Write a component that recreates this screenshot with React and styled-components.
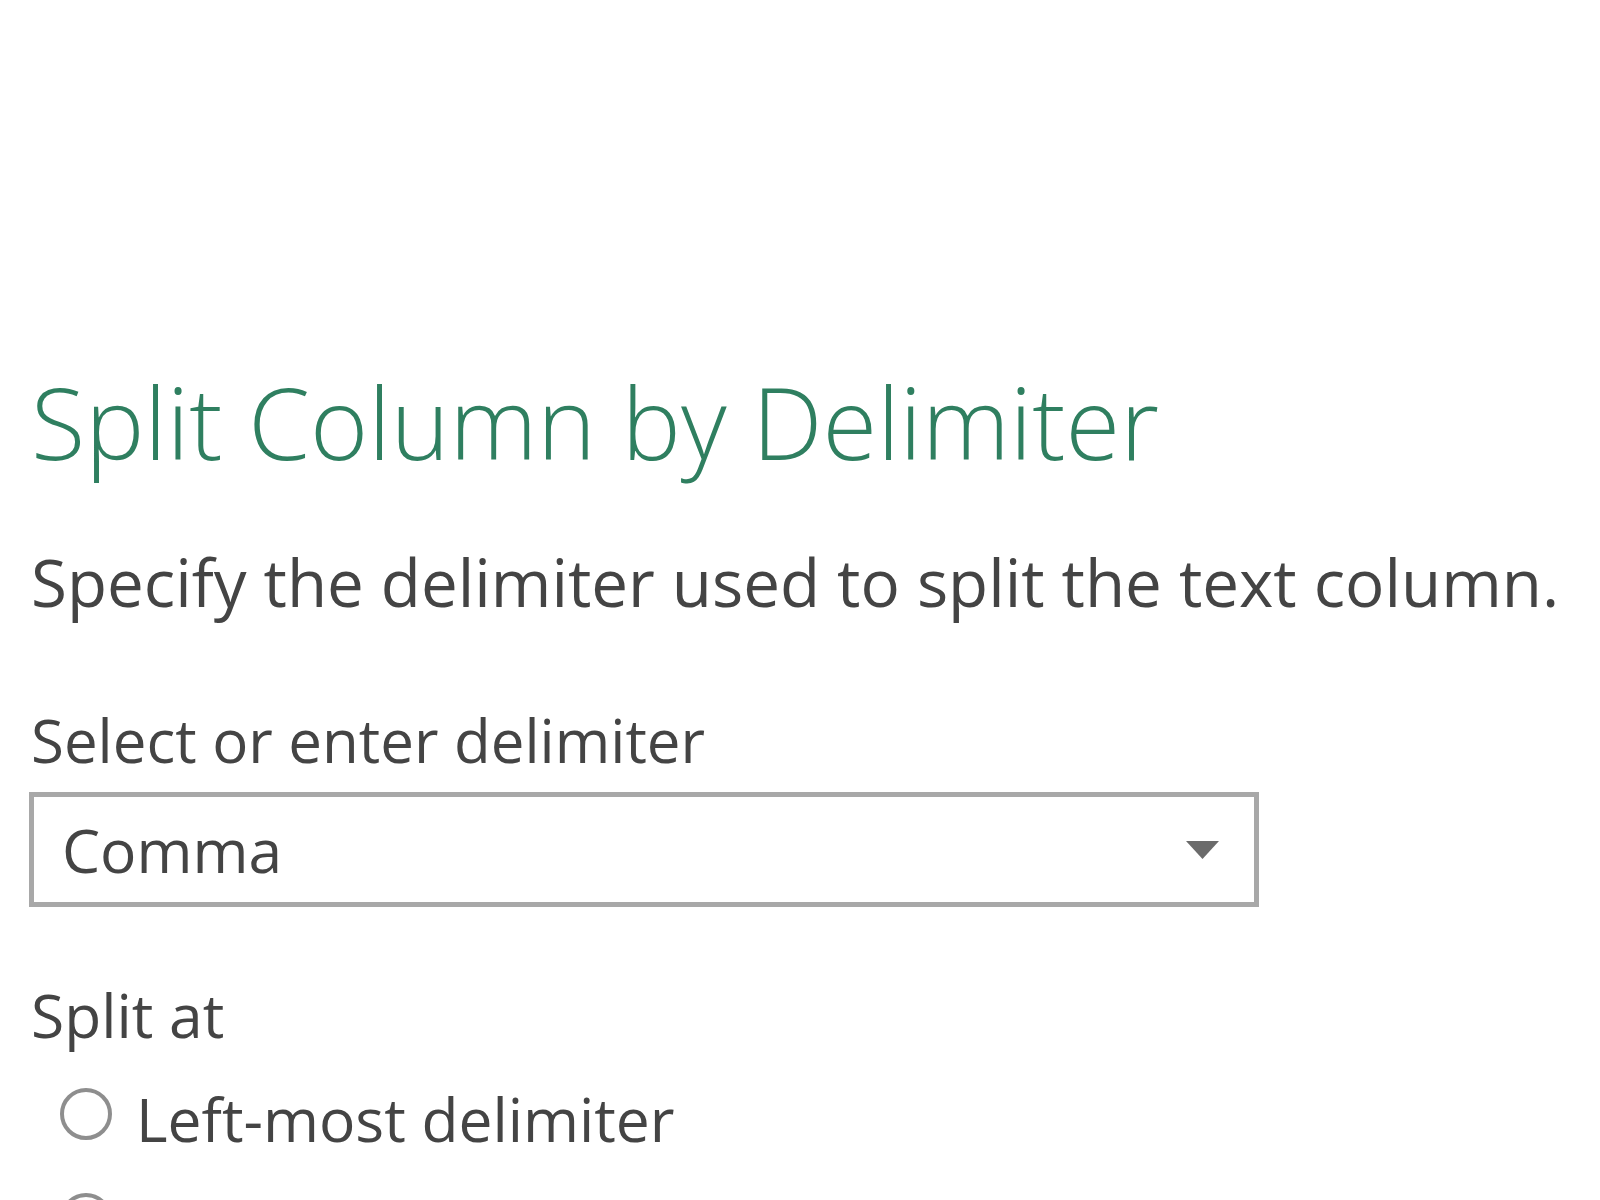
import React from "react";
import styled, { createGlobalStyle } from "styled-components";

const Global = createGlobalStyle`
  html, body { margin: 0; padding: 0; background: #ffffff; }
  body { font-family: "Open Sans", "Noto Sans", sans-serif; overflow: hidden; height: 1200px; }
`;

const Dialog = styled.div`
  padding: 362px 0 0 31px;
  display: flex;
  flex-direction: column;
  align-items: flex-start;
  color: #444444;
`;

const Title = styled.h1`
  margin: 0;
  font-weight: 300;
  font-size: 99.4px;
  line-height: 120px;
  color: #2f7f60;
  white-space: nowrap;
`;

const Subtitle = styled.p`
  margin: 60px 0 0 0;
  font-size: 65.5px;
  line-height: 80px;
  white-space: nowrap;
`;

const Label = styled.p`
  margin: ${(p) => p.$mt || 0}px 0 0 0;
  font-size: ${(p) => p.$size || 60.5}px;
  line-height: 80px;
  white-space: nowrap;
`;

const Select = styled.div`
  box-sizing: border-box;
  margin: 12px 0 0 -2px;
  width: 1230px;
  height: 115px;
  border: 5px solid #a8a8a8;
  background: #ffffff;
  display: flex;
  align-items: center;
  justify-content: space-between;
  padding: 0 35px 0 28px;
`;

const SelectValue = styled.span`
  font-size: 60.5px;
  line-height: 80px;
  color: #444444;
`;

const Arrow = styled.svg`
  width: 33px;
  height: 18px;
  display: block;
`;

const RadioRow = styled.label`
  margin-top: ${(p) => p.$mt}px;
  display: flex;
  align-items: center;
  gap: 24px;
  padding-left: 29px;
  height: 80px;
`;

const RadioCircle = styled.span`
  box-sizing: border-box;
  width: 52px;
  height: 52px;
  border-radius: 50%;
  border: 4px solid #8e8e8e;
  background: #ffffff;
  margin-bottom: 10px;
  flex: none;
`;

const RadioLabel = styled.span`
  font-size: 60.5px;
  line-height: 80px;
  white-space: nowrap;
`;

function Radio({ label, mt }) {
  return (
    <RadioRow $mt={mt}>
      <RadioCircle />
      <RadioLabel>{label}</RadioLabel>
    </RadioRow>
  );
}

export default function App() {
  return (
    <>
      <Global />
      <Dialog>
        <Title>Split Column by Delimiter</Title>
        <Subtitle>Specify the delimiter used to split the text column.</Subtitle>
        <Label $mt={78} $size={60}>Select or enter delimiter</Label>
        <Select>
          <SelectValue>Comma</SelectValue>
          <Arrow viewBox="0 0 33 18">
            <polygon points="0,0 33,0 16.5,18" fill="#6b6b6b" />
          </Arrow>
        </Select>
        <Label $mt={68}>Split at</Label>
        <Radio label="Left-most delimiter" mt={24} />
        <Radio label="Right-most delimiter" mt={25} />
      </Dialog>
    </>
  );
}
